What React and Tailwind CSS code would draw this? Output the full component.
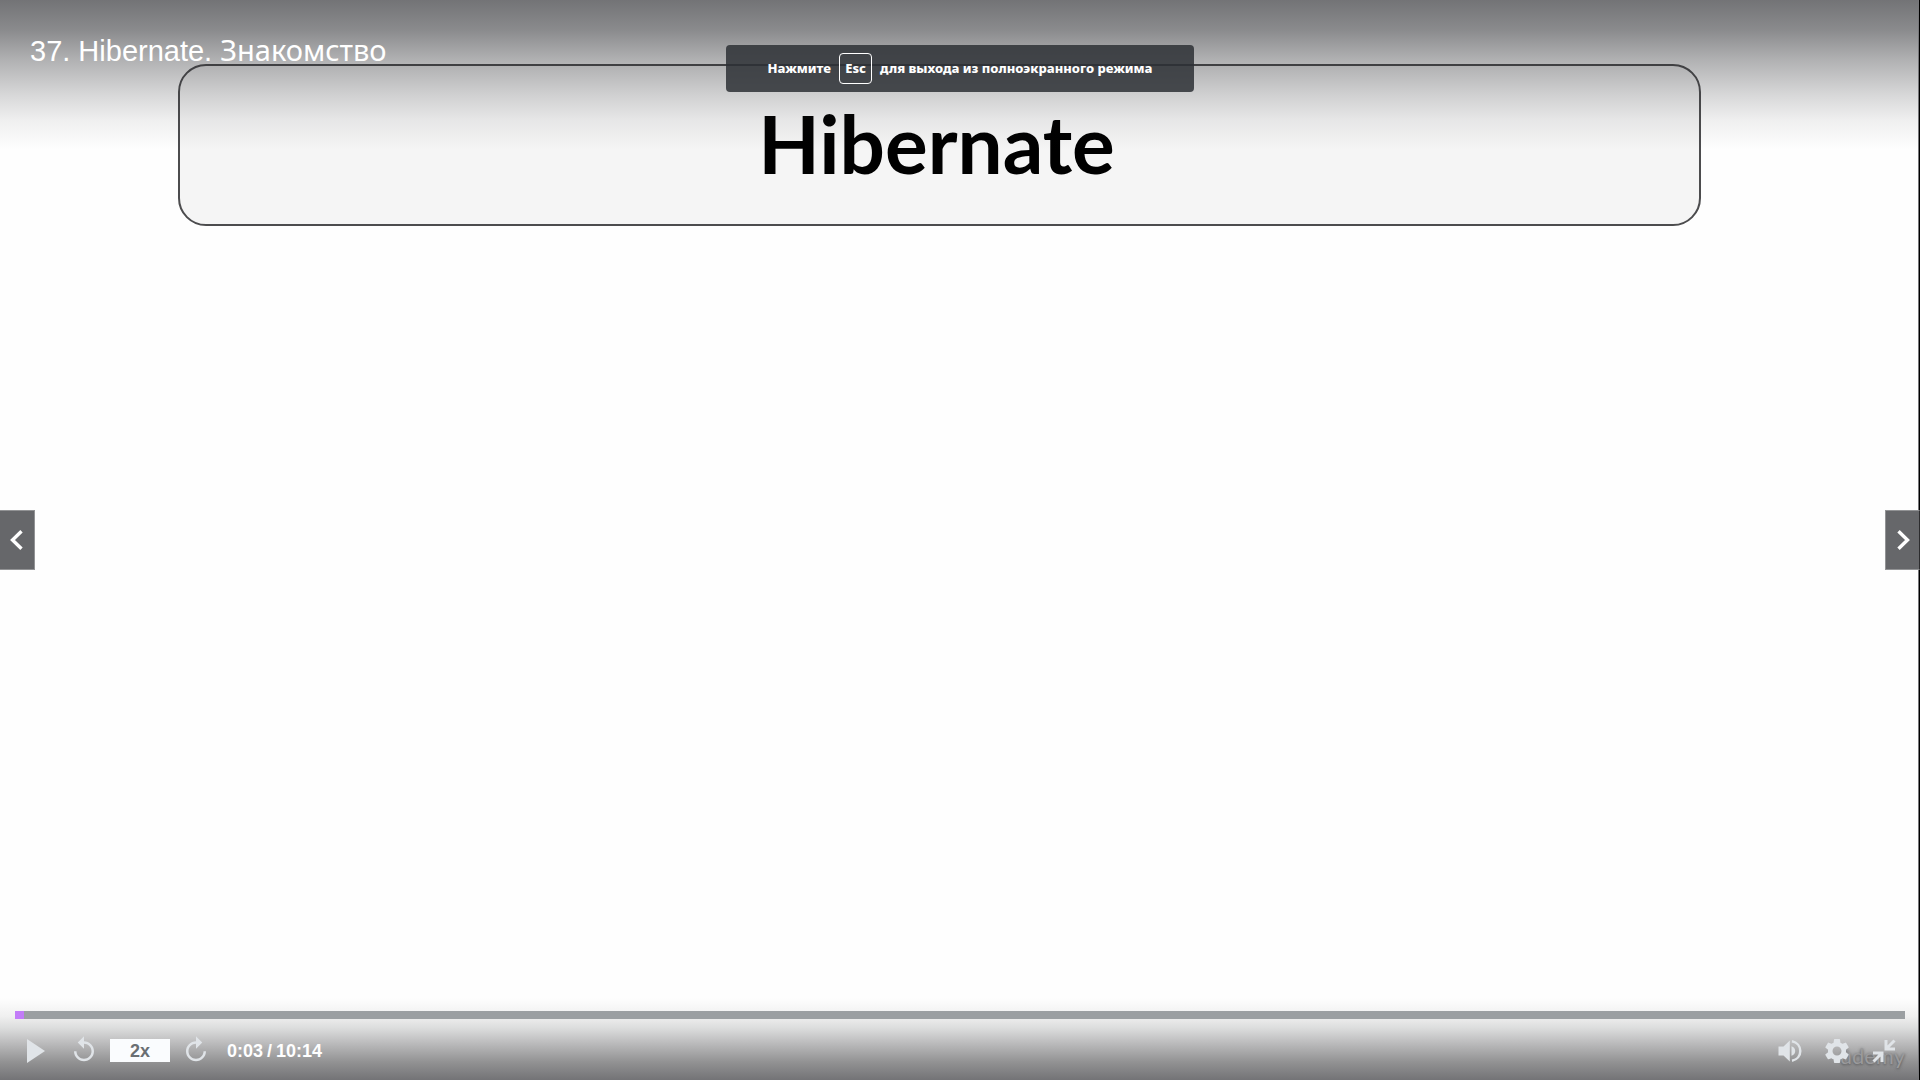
import { MdReplay, MdSettings } from "react-icons/md";

function NavButton({ side }) {
  const left = side === "left";
  return (
    <button
      type="button"
      aria-label={left ? "Предыдущая лекция" : "Следующая лекция"}
      className={
        "absolute top-1/2 flex h-15 w-[35px] -translate-y-1/2 items-center justify-center border border-[#929395] bg-[#66676a] text-white " +
        (left ? "left-0 border-l-0" : "right-0 border-r-[#2c2c2e]")
      }
    >
      <svg width="24" height="24" viewBox="0 0 24 24" fill="none" stroke="currentColor" strokeWidth="3.4">
        <path d={left ? "M16.5 3.2 7.5 12l9 8.8" : "M7.5 3.2 16.5 12l-9 8.8"} />
      </svg>
    </button>
  );
}

function VolumeIcon() {
  return (
    <svg width="24" height="24" viewBox="0 0 24 24" fill="currentColor">
      <path d="M.5 7.500v9h5l6.300 6V1.500l-6.300 6z" />
      <path d="M13.500 7.300c2.400.7 3.700 2.500 3.700 4.700s-1.300 4-3.700 4.700z" />
      <path d="M14 2.300c5 1 8.300 5 8.300 9.700S19 20.700 14 21.700" fill="none" stroke="currentColor" strokeWidth="2.500" />
    </svg>
  );
}

function Controls() {
  return (
    <footer className="relative mt-auto flex flex-col bg-[linear-gradient(to_bottom,transparent_8px,#f0f0f0_26px,#dcdddd_38px,#c2c2c3_50px,#929293_72px,#737376_100%)] px-[15px] pt-[21px] text-[#e0e4e8]">
      <input
        type="range"
        aria-label="Позиция воспроизведения"
        min="0"
        max="614"
        defaultValue="3"
        className="block h-2 w-full appearance-none bg-[linear-gradient(to_right,#c27cf8_9px,#9b9fa2_9px)] [&::-webkit-slider-thumb]:h-2 [&::-webkit-slider-thumb]:w-0 [&::-webkit-slider-thumb]:appearance-none"
      />
      <div className="flex h-[61px] items-center pt-0.5">
        <button type="button" aria-label="Воспроизвести" className="flex w-[54px] pl-3">
          <svg width="18" height="24" viewBox="0 0 18 24" fill="currentColor">
            <path d="M0 0v24l18-12z" />
          </svg>
        </button>
        <button type="button" aria-label="Назад" className="pb-0.5">
          <MdReplay size={30} />
        </button>
        <button
          type="button"
          className="mx-[11px] flex h-[23px] w-15 items-center justify-center bg-[#fafcfe] font-['Liberation_Sans',sans-serif] text-[18px] leading-5 font-bold text-[#6a6f73]"
        >
          2x
        </button>
        <button type="button" aria-label="Вперёд" className="-scale-x-100 pb-0.5">
          <MdReplay size={30} />
        </button>
        <div className="ml-4 flex gap-1 font-['Liberation_Sans',sans-serif] text-[18px] leading-6 font-bold text-white">
          <span>0:03</span>
          <span>/</span>
          <span>10:14</span>
        </div>
        <div className="relative ml-auto flex items-center gap-5 pr-[9px]">
          <span className="absolute top-2 right-0 font-[Lato,sans-serif] text-[22px] leading-6 text-[#9a9a9c] [text-shadow:0_1px_3px_#505052]">
            ûdemy
          </span>
          <button type="button" aria-label="Громкость" className="relative">
            <VolumeIcon />
          </button>
          <button type="button" aria-label="Настройки" className="relative">
            <MdSettings size={30} />
          </button>
          <button type="button" aria-label="Выйти из полноэкранного режима" className="relative">
            <svg width="24" height="24" viewBox="0 0 24 24" fill="none" stroke="currentColor" strokeWidth="3">
              <path d="M22.500 1.500 14.500 9.500M14 1v9h9M1.500 22.500l8-8M1 14h9v9" />
            </svg>
          </button>
        </div>
      </div>
    </footer>
  );
}

export default function App() {
  return (
    <main className="relative flex min-h-screen flex-col overflow-hidden bg-[#fefefe]">
      <section className="pt-16 pr-[219px] pl-[178px]">
        <div className="flex h-[162px] items-center justify-center rounded-[28px] border-2 border-[#4c4c4e] bg-[#f5f5f5] pr-1.5 pb-1">
          <h1 className="font-[Lato,sans-serif] text-[80px] leading-none font-bold text-black">Hibernate</h1>
        </div>
      </section>

      <header className="absolute inset-x-0 top-0 h-40 bg-[linear-gradient(to_bottom,#28292de0_-40px,#28292da6_0,#28292d8a_30px,#28292d5c_60px,#28292d2e_95px,#28292d12_120px,transparent_150px)] px-[30px] pt-[30px]">
        <h2 className="font-['Liberation_Sans',sans-serif] text-[29px] leading-10 text-white">
          37. Hibernate. <span className="font-['Noto_Sans',sans-serif]">Знакомство</span>
        </h2>
      </header>

      <div
        role="status"
        className="absolute top-[45px] left-1/2 flex h-[47px] w-[468px] -translate-x-1/2 items-center justify-center gap-2 rounded-sm bg-[#2d3035]/85 font-['Noto_Sans',sans-serif] text-[13px] leading-5 font-extrabold whitespace-nowrap text-white"
      >
        <span className="pb-0.5">Нажмите</span>
        <kbd className="flex h-[31px] w-[33px] items-center justify-center rounded-sm border border-white pb-0.5 font-['Noto_Sans',sans-serif]">
          Esc
        </kbd>
        <span className="pb-0.5">для выхода из полноэкранного режима</span>
      </div>

      <Controls />

      <div className="absolute inset-y-0 right-0 w-0.5 border-l border-[#77777a] bg-black" />
      <NavButton side="left" />
      <NavButton side="right" />
    </main>
  );
}
